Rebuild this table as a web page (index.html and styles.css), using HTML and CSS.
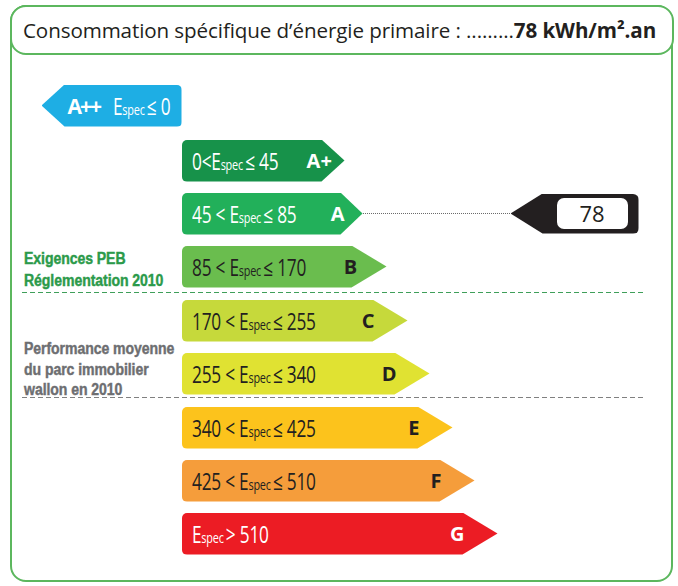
FILE: index.html
```html
<!DOCTYPE html>
<html lang="fr">
<head>
<meta charset="utf-8">
<title>Consommation spécifique d’énergie primaire</title>
<link rel="stylesheet" href="styles.css">
</head>
<body>
<div class="frame">
  <div class="head">Consommation spécifique d’énergie primaire : .........<b>78 kWh/m².an</b></div>
  <div class="content">
    <div class="toprow">
      <div class="bar app"><b class="cls">A++</b><span class="rng">E<small>spec</small>≤ 0</span></div>
    </div>

    <div class="group g1">
      <div class="cell"><div class="bar ap"><span class="rng">0&lt;E<small>spec</small>≤ 45</span><b class="cls">A+</b></div></div>
      <div class="cell arow">
        <div class="bar a"><span class="rng">45 &lt; E<small>spec</small>≤ 85</span><b class="cls">A</b></div>
        <div class="lead"></div>
        <div class="ptr"><div class="val">78</div></div>
      </div>
      <div class="side peb"><span class="sq">Exigences PEB<br>Réglementation 2010</span></div>
      <div class="cell"><div class="bar b"><span class="rng">85 &lt; E<small>spec</small>≤ 170</span><b class="cls">B</b></div></div>
    </div>

    <div class="group g2">
      <div class="side perf"><span class="sq">Performance moyenne<br>du parc immobilier<br>wallon en 2010</span></div>
      <div class="cell"><div class="bar c"><span class="rng">170 &lt; E<small>spec</small>≤ 255</span><b class="cls">C</b></div></div>
      <div class="cell"><div class="bar d"><span class="rng">255 &lt; E<small>spec</small>≤ 340</span><b class="cls">D</b></div></div>
    </div>

    <div class="group g3">
      <div class="cell"><div class="bar e"><span class="rng">340 &lt; E<small>spec</small>≤ 425</span><b class="cls">E</b></div></div>
      <div class="cell"><div class="bar f"><span class="rng">425 &lt; E<small>spec</small>≤ 510</span><b class="cls">F</b></div></div>
      <div class="cell"><div class="bar g"><span class="rng">E<small>spec</small>&gt; 510</span><b class="cls">G</b></div></div>
    </div>
  </div>
</div>
</body>
</html>
```
FILE: styles.css
```css
* { box-sizing: border-box; }
html, body { margin: 0; padding: 0; background: #fff; }
body { font-family: "Open Sans", "Noto Sans", sans-serif; color: #231f20; }

.frame {
  margin: 5px 0 0 10px;
  width: 663px;
  height: 577px;
  border: 2.5px solid #5cb75e;
  border-radius: 16px;
}

.head {
  margin: -2.5px -2.5px 0;
  height: 50px;
  border: 2.5px solid #5cb75e;
  border-radius: 16px;
  background: #fff;
  display: flex;
  align-items: center;
  padding: 1px 0 0 11.5px;
  font-size: 20.6px;
  letter-spacing: -0.1px;
  white-space: nowrap;
}
.head b { font-weight: 700; }

.content {
  padding: 30px 27.5px 0 9.5px;
}

.toprow {
  width: 160px;
  display: flex;
  justify-content: flex-end;
  margin-bottom: 13px;
}

.group {
  display: grid;
  grid-template-columns: 160px 1fr;
  row-gap: 11px;
}
.group .cell { grid-column: 2; }
.group .side { grid-column: 1; }

.g1 {
  padding-bottom: 6px;
  background: repeating-linear-gradient(to right, #3f9f5a 0 5px, transparent 5px 8px) left bottom / 100% 1.3px no-repeat;
}
.g2 {
  padding-top: 6px;
  padding-bottom: 4px;
  background: repeating-linear-gradient(to right, #808080 0 5px, transparent 5px 8px) left bottom / 100% 1.3px no-repeat;
}
.g3 { padding-top: 8px; }

.side {
  font-family: "Liberation Sans", Arial, sans-serif;
  font-weight: 700;
  font-size: 17.4px;
  line-height: 20.5px;
  padding-left: 2px;
  white-space: nowrap;
  -webkit-text-stroke: 0.45px currentColor;
}
.sq {
  display: inline-block;
  transform: scaleX(0.81);
  transform-origin: left center;
  letter-spacing: -0.1px;
}
.peb {
  grid-row: 3;
  align-self: start;
  margin: 1px 0 -3px;
  line-height: 22px;
  color: #2b9a4a;
}
.perf {
  grid-row: 1 / span 2;
  align-self: end;
  margin-bottom: -5px;
  color: #6d6e71;
}

.bar {
  --tip: 35px;
  height: 42px;
  border-radius: 5px;
  display: flex;
  align-items: center;
  justify-content: space-between;
  padding: 0 33px 0 10px;
  color: #231f20;
  clip-path: polygon(0 0, calc(100% - var(--tip)) 0, 100% 50%, calc(100% - var(--tip)) 100%, 0 100%);
}
.rng {
  display: inline-block;
  font-family: "Open Sans", "Noto Sans", sans-serif;
  font-size: 23px;
  white-space: nowrap;
  transform: scaleX(0.75);
  transform-origin: left center;
  letter-spacing: -0.3px;
}
.rng small { font-size: 14.5px; margin-right: 3px; letter-spacing: -0.3px; }
.cls {
  font-family: "Open Sans", "Noto Sans", sans-serif;
  font-weight: 700;
  font-size: 20px;
}

.app {
  width: 140px;
  background: #1eaee4;
  color: #fff;
  justify-content: flex-start;
  padding: 0 0 0 26px;
  clip-path: polygon(23px 0, 100% 0, 100% 100%, 23px 100%, 0 50%);
}
.app .cls { font-size: 21px; letter-spacing: -2px; margin-right: 13px; }

.ap { width: 163px; --tip: 23px; background: #17924a; color: #fff; padding-right: 23px; }
.a  { width: 181px; --tip: 22px; background: #22b05a; color: #fff; }
.b  { width: 205px; background: #6abd4e; }
.c  { width: 226px; background: #c6d93b; }
.d  { width: 248px; background: #e0e232; }
.e  { width: 271px; background: #fcc31c; }
.f  { width: 293px; background: #f59d3b; }
.g  { width: 316px; background: #ec1c24; color: #fff; }

.arow {
  display: flex;
  align-items: center;
  padding-right: 5px;
}
.arow .bar { flex: none; }
.lead {
  flex: 1;
  height: 1px;
  background: repeating-linear-gradient(to right, #6b6b6b 0 1px, transparent 1px 2px);
}
.ptr {
  flex: none;
  width: 128px;
  height: 40px;
  background: #231f20;
  border-radius: 6px;
  clip-path: polygon(32px 0, 100% 0, 100% 100%, 32px 100%, 0 50%);
  display: flex;
  align-items: center;
  justify-content: flex-end;
  padding-right: 11px;
}
.val {
  width: 71px;
  height: 31px;
  background: #fff;
  border-radius: 7px;
  font-family: "Open Sans", "Noto Sans", sans-serif;
  font-size: 22px;
  line-height: 31px;
  text-align: center;
  color: #231f20;
}
```
